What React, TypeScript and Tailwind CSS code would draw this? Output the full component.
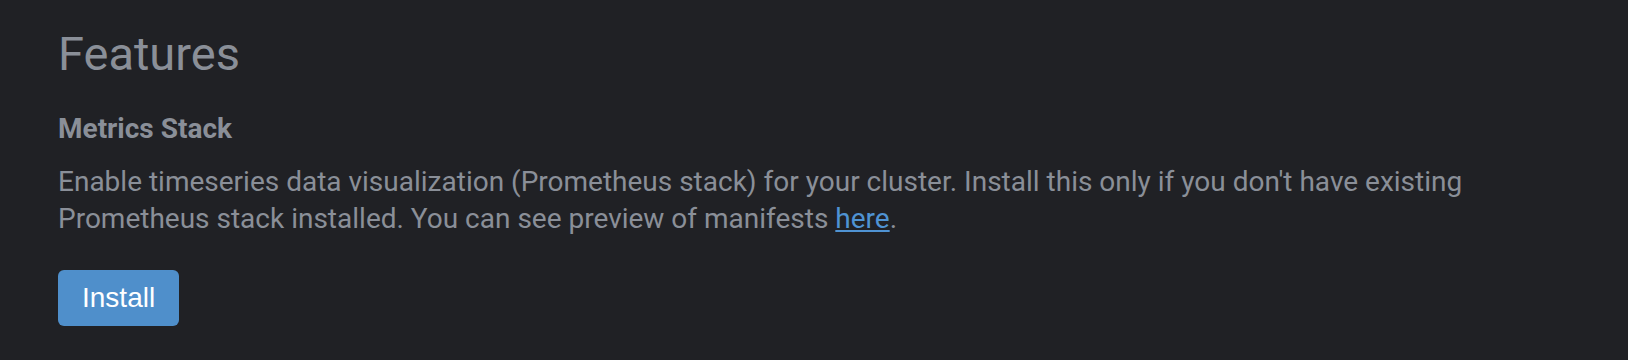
export default function App() {
  return (
    <div
      className="min-h-screen bg-[#202125] px-[58px] pt-[26px] text-[#8a8f98]"
      style={{ fontFamily: 'Roboto, "Liberation Sans", sans-serif' }}
    >
      <h1 className="text-[47px] font-normal leading-[56px]">Features</h1>
      <h2 className="mt-[30px] text-[28px] font-bold leading-[34px]">Metrics Stack</h2>
      <p className="mt-[17px] text-[28px] leading-[37px]">
        Enable timeseries data visualization (Prometheus stack) for your cluster. Install this only if you don't have existing
        <br />
        Prometheus stack installed. You can see preview of manifests{' '}
        <a href="#" className="text-[#4f93d3] underline">
          here
        </a>
        .
      </p>
      <button className="mt-[33px] h-[56px] rounded-[6px] bg-[#4f8fcb] px-[24px] font-['Liberation_Sans',Arial,sans-serif] text-[28px] text-white">
        Install
      </button>
    </div>
  );
}
